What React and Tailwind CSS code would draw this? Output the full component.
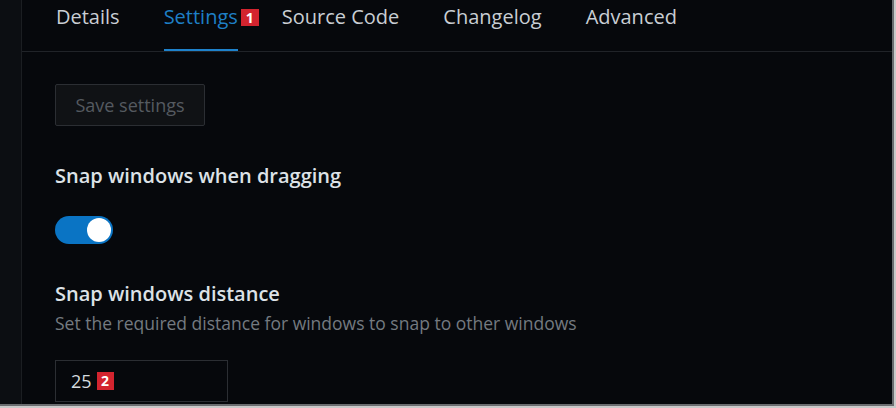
export default function App() {
  const font = { fontFamily: '"Open Sans", "Noto Sans", sans-serif' };
  return (
    <div className="w-[896px] h-[408px] bg-[#c9c9c9] overflow-hidden" style={font}>
      <div className="w-[894px] h-[406px] flex bg-[#06080c] border-r-2 border-b-2 border-[#6b6d70]">
        <div className="w-[22px] h-full bg-[#0c0e12] border-r border-[#1b1e22]" />
        <div className="flex-1 flex flex-col">
          <div className="flex h-[52px] border-b border-[#202328] pl-[12px] text-[20px] leading-[26px] text-[#c9ced4]">
            <div className="px-[22px] pt-[4px]">Details</div>
            <div className="px-[22px] pt-[4px] flex items-start">
              <span className="relative self-stretch border-b-2 border-[#1e82cc] text-[#1e7fc6]">
                Settings
                <span className="absolute left-full top-[5px] ml-[3px] w-[18px] h-[17px] bg-[#d3242f] text-white text-[14px] font-bold leading-[17px] text-center">1</span>
              </span>
            </div>
            <div className="px-[22px] pt-[4px]">Source Code</div>
            <div className="px-[22px] pt-[4px]">Changelog</div>
            <div className="px-[22px] pt-[4px]">Advanced</div>
          </div>
          <div className="pl-[33px] pt-[32px] flex flex-col items-start">
            <button className="h-[42px] w-[150px] border border-[#2b2e33] bg-[#101215] text-[#555a60] text-[18px] rounded-[2px]">
              Save settings
            </button>
            <div className="mt-[37px] text-[20px] font-semibold text-[#dde2e7] leading-[26px]">Snap windows when dragging</div>
            <div className="mt-[27px] w-[58px] h-[28px] rounded-full bg-[#0a74c4] flex items-center justify-end pr-[2px]">
              <div className="w-[24px] h-[24px] rounded-full bg-white" />
            </div>
            <div className="mt-[37px] text-[20px] font-semibold text-[#dde2e7] leading-[26px]">Snap windows distance</div>
            <div className="mt-[4px] text-[17.5px] text-[#747a80] leading-[24px]">Set the required distance for windows to snap to other windows</div>
            <div className="mt-[25px] w-[173px] h-[42px] border border-[#2b2e33] flex items-center pl-[15px] text-[18px] text-[#d5dade]">
              <span>25</span>
              <span className="ml-[5px] w-[17px] h-[18px] bg-[#d3242f] text-white text-[14px] font-bold leading-[18px] text-center">2</span>
            </div>
          </div>
        </div>
      </div>
    </div>
  );
}
